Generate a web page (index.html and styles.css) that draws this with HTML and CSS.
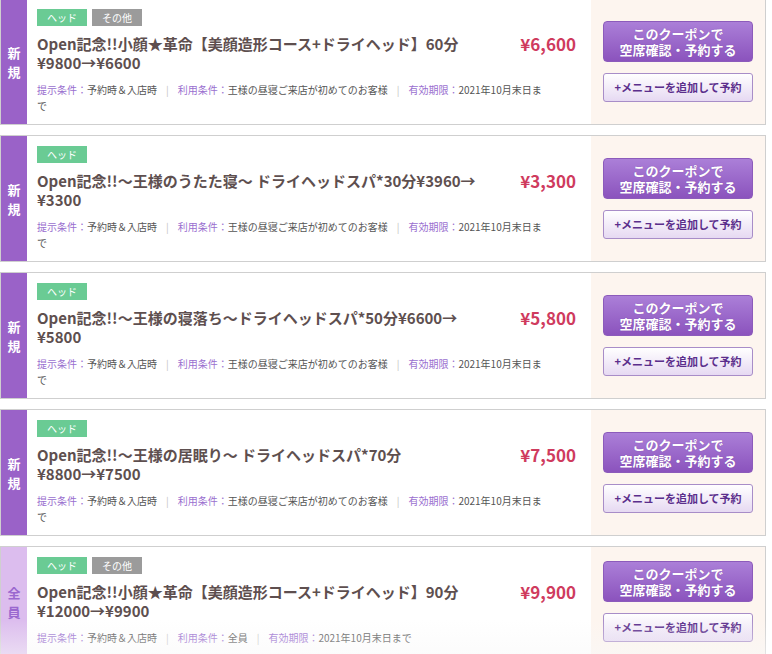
FILE: index.html
```html
<!DOCTYPE html>
<html lang="ja">
<head>
<meta charset="utf-8">
<title>クーポン</title>
<link rel="stylesheet" href="styles.css">
</head>
<body>
<div class="list">
  <div class="card">
    <div class="badge"><span>新</span><span>規</span></div>
    <div class="main">
      <div class="tags"><span class="tag tag-green">ヘッド</span><span class="tag tag-gray">その他</span></div>
      <div class="head">
        <p class="title">Open記念!!小顔★革命【美顔造形コース+ドライヘッド】60分<br>¥9800→¥6600</p>
        <p class="price">¥6,600</p>
      </div>
      <p class="cond"><span class="k">提示条件：</span>予約時＆入店時<span class="sep">|</span><span class="k">利用条件：</span>王様の昼寝ご来店が初めてのお客様<span class="sep">|</span><span class="k">有効期限：</span>2021年10月末日まで</p>
    </div>
    <div class="side">
      <a class="btn-main" href="#"><span>このクーポンで</span><span>空席確認・予約する</span></a>
      <a class="btn-sub" href="#">+メニューを追加して予約</a>
    </div>
  </div>

  <div class="card">
    <div class="badge"><span>新</span><span>規</span></div>
    <div class="main">
      <div class="tags"><span class="tag tag-green">ヘッド</span></div>
      <div class="head">
        <p class="title">Open記念!!〜王様のうたた寝〜 ドライヘッドスパ*30分¥3960→<br>¥3300</p>
        <p class="price">¥3,300</p>
      </div>
      <p class="cond"><span class="k">提示条件：</span>予約時＆入店時<span class="sep">|</span><span class="k">利用条件：</span>王様の昼寝ご来店が初めてのお客様<span class="sep">|</span><span class="k">有効期限：</span>2021年10月末日まで</p>
    </div>
    <div class="side">
      <a class="btn-main" href="#"><span>このクーポンで</span><span>空席確認・予約する</span></a>
      <a class="btn-sub" href="#">+メニューを追加して予約</a>
    </div>
  </div>

  <div class="card">
    <div class="badge"><span>新</span><span>規</span></div>
    <div class="main">
      <div class="tags"><span class="tag tag-green">ヘッド</span></div>
      <div class="head">
        <p class="title">Open記念!!〜王様の寝落ち〜ドライヘッドスパ*50分¥6600→<br>¥5800</p>
        <p class="price">¥5,800</p>
      </div>
      <p class="cond"><span class="k">提示条件：</span>予約時＆入店時<span class="sep">|</span><span class="k">利用条件：</span>王様の昼寝ご来店が初めてのお客様<span class="sep">|</span><span class="k">有効期限：</span>2021年10月末日まで</p>
    </div>
    <div class="side">
      <a class="btn-main" href="#"><span>このクーポンで</span><span>空席確認・予約する</span></a>
      <a class="btn-sub" href="#">+メニューを追加して予約</a>
    </div>
  </div>

  <div class="card">
    <div class="badge"><span>新</span><span>規</span></div>
    <div class="main">
      <div class="tags"><span class="tag tag-green">ヘッド</span></div>
      <div class="head">
        <p class="title">Open記念!!〜王様の居眠り〜 ドライヘッドスパ*70分<br>¥8800→¥7500</p>
        <p class="price">¥7,500</p>
      </div>
      <p class="cond"><span class="k">提示条件：</span>予約時＆入店時<span class="sep">|</span><span class="k">利用条件：</span>王様の昼寝ご来店が初めてのお客様<span class="sep">|</span><span class="k">有効期限：</span>2021年10月末日まで</p>
    </div>
    <div class="side">
      <a class="btn-main" href="#"><span>このクーポンで</span><span>空席確認・予約する</span></a>
      <a class="btn-sub" href="#">+メニューを追加して予約</a>
    </div>
  </div>

  <div class="card">
    <div class="badge badge-all"><span>全</span><span>員</span></div>
    <div class="main">
      <div class="tags"><span class="tag tag-green">ヘッド</span><span class="tag tag-gray">その他</span></div>
      <div class="head">
        <p class="title">Open記念!!小顔★革命【美顔造形コース+ドライヘッド】90分<br>¥12000→¥9900</p>
        <p class="price">¥9,900</p>
      </div>
      <p class="cond"><span class="k">提示条件：</span>予約時＆入店時<span class="sep">|</span><span class="k">利用条件：</span>全員<span class="sep">|</span><span class="k">有効期限：</span>2021年10月末日まで</p>
    </div>
    <div class="side">
      <a class="btn-main" href="#"><span>このクーポンで</span><span>空席確認・予約する</span></a>
      <a class="btn-sub" href="#">+メニューを追加して予約</a>
    </div>
  </div>
  <div class="fade"></div>
</div>
</body>
</html>
```

FILE: styles.css
```css
html, body {
  margin: 0;
  padding: 0;
  background: #fff;
}
body {
  font-family: "Noto Sans CJK JP", "Noto Sans", sans-serif;
  color: #555;
  overflow: hidden;
  height: 654px;
}
.list {
  position: relative;
  width: 766px;
  margin-top: -2px;
  display: flex;
  flex-direction: column;
  gap: 10px;
}
.card {
  display: flex;
  border: 1px solid #cfcfcf;
  background: #fff;
}
.badge {
  width: 26px;
  flex: none;
  background: #9a62c8;
  color: #fff;
  font-weight: bold;
  font-size: 13px;
  line-height: 19px;
  display: flex;
  flex-direction: column;
  align-items: center;
  justify-content: center;
}
.badge-all {
  background: #dcbdee;
  color: #9a68cf;
}
.main {
  flex: 1;
  min-width: 0;
  padding: 10px 15px 10px 10px;
}
.tags {
  display: flex;
  gap: 5px;
  height: 17px;
}
.tag {
  width: 50px;
  height: 17px;
  font-size: 10px;
  line-height: 17px;
  text-align: center;
  color: #fff;
}
.tag-green { background: #6acb94; }
.tag-gray { background: #9b9b9b; }
.head {
  display: flex;
  justify-content: space-between;
  align-items: flex-start;
  margin-top: 8px;
}
.title {
  margin: 0;
  font-size: 15px;
  line-height: 19px;
  font-weight: bold;
  color: #5e4f4f;
  white-space: nowrap;
}
.price {
  margin: 0;
  font-size: 17px;
  line-height: 20px;
  font-weight: bold;
  color: #cf3b5e;
}
.cond {
  margin: 10px 30px 0 0;
  font-size: 10px;
  line-height: 16px;
  color: #555;
}
.k { color: #9a6fcf; }
.sep {
  color: #c4c4c4;
  margin: 0 9px;
}
.side {
  width: 174px;
  flex: none;
  background: #fdf5ef;
  display: flex;
  flex-direction: column;
  align-items: center;
  justify-content: center;
  gap: 11px;
}
.btn-main {
  box-sizing: border-box;
  width: 150px;
  height: 41px;
  border: 1px solid #8c5bbb;
  border-radius: 4px;
  background: linear-gradient(#ab7fd8, #8b53bd);
  color: #fff;
  font-weight: bold;
  font-size: 13px;
  line-height: 15px;
  text-align: center;
  text-decoration: none;
  display: flex;
  flex-direction: column;
  align-items: center;
  justify-content: center;
  gap: 1px;
  text-shadow: 0 0 1px rgba(80, 30, 120, 0.4);
}
.btn-sub {
  box-sizing: border-box;
  width: 150px;
  height: 29px;
  border: 1px solid #a88dc8;
  border-radius: 3px;
  background: linear-gradient(#ffffff, #e6d9f2);
  color: #5b2e8c;
  font-weight: bold;
  font-size: 11px;
  line-height: 27px;
  text-align: center;
  text-decoration: none;
}
.fade {
  position: absolute;
  left: 0;
  right: 0;
  top: 622px;
  height: 40px;
  background: linear-gradient(rgba(250, 250, 250, 0), rgba(248, 248, 248, 0.6));
  pointer-events: none;
}
```
